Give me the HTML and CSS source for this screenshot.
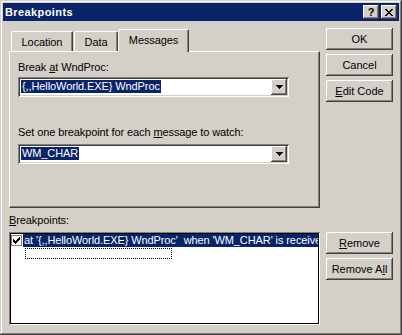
FILE: index.html
```html
<!DOCTYPE html>
<html lang="en">

<head>
    <meta charset="UTF-8">
    <link rel="stylesheet" href="styles.css">
</head>

<body>
    <div class="window">
        <div class="titlebar">
            <span class="title">Breakpoints</span>
            <div class="title-buttons">
                <button class="title-btn help">?</button>
                <button class="title-btn close">
                    <svg width="8" height="7" viewBox="0 0 8 7">
                        <path fill="#000" d="M0 0h2v1h-2z M6 0h2v1h-2z M1 1h2v1h-2z M5 1h2v1h-2z M2 2h4v1h-4z M3 3h2v1h-2z M2 4h4v1h-4z M1 5h2v1h-2z M5 5h2v1h-2z M0 6h2v1h-2z M6 6h2v1h-2z" />
                    </svg>
                </button>
            </div>
        </div>

        <div class="dialog">
            <div class="tab-area">
                <div class="tabs">
                    <div class="tab tab-location">Location</div>
                    <div class="tab tab-data">Data</div>
                    <div class="tab tab-messages selected">Messages</div>
                </div>
                <div class="tab-panel">
                    <div class="label">Break <u>a</u>t WndProc:</div>
                    <div class="combo">
                        <div class="combo-field"><span class="sel">{,,HelloWorld.EXE} WndProc</span></div>
                        <div class="combo-btn">
                            <svg width="7" height="4" viewBox="0 0 7 4">
                                <path fill="#000" d="M0 0h7v1h-7z M1 1h5v1h-5z M2 2h3v1h-3z M3 3h1v1h-1z" />
                            </svg>
                        </div>
                    </div>
                    <div class="label label-msg">Set one breakpoint for each <u>m</u>essage to watch:</div>
                    <div class="combo">
                        <div class="combo-field"><span class="sel">WM_CHAR</span></div>
                        <div class="combo-btn">
                            <svg width="7" height="4" viewBox="0 0 7 4">
                                <path fill="#000" d="M0 0h7v1h-7z M1 1h5v1h-5z M2 2h3v1h-3z M3 3h1v1h-1z" />
                            </svg>
                        </div>
                    </div>
                </div>
            </div>

            <div class="btn-col">
                <button class="btn">OK</button>
                <button class="btn">Cancel</button>
                <button class="btn"><u>E</u>dit Code</button>
            </div>

            <div class="label list-label"><u>B</u>reakpoints:</div>
            <div></div>

            <div class="listbox">
                <div class="list-row">
                    <span class="check">
                        <svg width="7" height="7" viewBox="0 0 7 7">
                            <path fill="#000" d="M6 0h1v1h-1z M5 1h2v1h-2z M0 2h1v1h-1z M4 2h3v1h-3z M0 3h2v1h-2z M3 3h3v1h-3z M0 4h5v1h-5z M1 5h3v1h-3z M2 6h1v1h-1z" />
                        </svg>
                    </span>
                    <span class="row-text">at '{,,HelloWorld.EXE} WndProc'  when 'WM_CHAR' is received</span>
                </div>
                <div class="list-row">
                    <span class="focus-rect"></span>
                </div>
            </div>

            <div class="btn-col">
                <button class="btn"><u>R</u>emove</button>
                <button class="btn">Remove A<u>l</u>l</button>
            </div>
        </div>
    </div>
</body>

</html>
```

FILE: styles.css
```css
body {
    margin: 0;
    font-family: "Liberation Sans", Arial, sans-serif;
    font-size: 11px;
    letter-spacing: -0.1px;
    color: #000;
    background-color: #d4d0c8;
}

u {
    text-underline-offset: 1px;
}

.window {
    width: 402px;
    height: 335px;
    box-sizing: border-box;
    padding: 3px;
    background-color: #d4d0c8;
    box-shadow: inset -1px -1px #404040, inset 1px 1px #d4d0c8,
        inset -2px -2px #808080, inset 2px 2px #fff;
}

.titlebar {
    height: 18px;
    background-color: #0a246a;
    color: #fff;
    display: flex;
    align-items: center;
    justify-content: space-between;
    padding: 0 2px;
}

.title {
    font-weight: bold;
    font-size: 11px;
    letter-spacing: 0.4px;
}

.title-buttons {
    display: flex;
    gap: 2px;
}

/* raised 3d look shared by all buttons */
.title-btn,
.btn,
.combo-btn {
    background-color: #d4d0c8;
    border: none;
    box-shadow: inset -1px -1px #404040, inset 1px 1px #fff,
        inset -2px -2px #808080, inset 2px 2px #d4d0c8;
}

.title-btn {
    width: 16px;
    height: 14px;
    padding: 0;
    display: flex;
    align-items: center;
    justify-content: center;
    font: bold 11px "Liberation Sans", Arial, sans-serif;
    color: #000;
}

.dialog {
    display: grid;
    grid-template-columns: 311px 67px;
    column-gap: 6px;
    align-items: start;
    padding: 7px 6px 0 6px;
}

.tabs {
    display: flex;
    align-items: flex-end;
    height: 23px;
    padding-left: 2px;
}

.tab {
    box-sizing: border-box;
    height: 20px;
    display: flex;
    align-items: center;
    justify-content: center;
    border-top: 1px solid #fff;
    border-left: 1px solid #fff;
    border-right: 1px solid #404040;
    border-radius: 2px 2px 0 0;
    box-shadow: inset -1px 0 #808080;
    background-color: #d4d0c8;
}

.tab-location {
    width: 62px;
    margin-right: 1px;
}

.tab-data {
    width: 44px;
}

.tab-messages {
    width: 71px;
}

.tab.selected {
    height: 23px;
    margin-bottom: -1px;
    padding-bottom: 2px;
    position: relative;
    z-index: 1;
}

.tab-panel {
    box-sizing: border-box;
    height: 157px;
    padding: 9px 0 0 8px;
    border-top: 1px solid #fff;
    border-left: 1px solid #fff;
    border-right: 1px solid #404040;
    border-bottom: 1px solid #404040;
    box-shadow: inset -1px -1px #808080;
}

.label {
    line-height: 13px;
    margin-bottom: 3px;
    white-space: nowrap;
}

.label-msg {
    margin-top: 29px;
    margin-bottom: 5px;
}

.combo {
    box-sizing: border-box;
    width: 271px;
    height: 20px;
    padding: 2px;
    display: flex;
    background-color: #fff;
    box-shadow: inset 1px 1px #808080, inset -1px -1px #fff,
        inset 2px 2px #404040, inset -2px -2px #d4d0c8;
}

.combo-field {
    flex: 1;
    padding: 1px;
    line-height: 13px;
}

.sel {
    display: inline-block;
    background-color: #0a246a;
    color: #fff;
    padding: 0 1px;
}

.combo-btn {
    width: 16px;
    height: 16px;
    display: flex;
    align-items: center;
    justify-content: center;
}

.btn-col {
    display: flex;
    flex-direction: column;
    gap: 4px;
}

.btn {
    height: 22px;
    width: 67px;
    padding: 0;
    font: 11px "Liberation Sans", Arial, sans-serif;
    color: #000;
}

.list-label {
    margin-top: 6px;
    margin-bottom: 5px;
}

.listbox {
    box-sizing: border-box;
    height: 93px;
    padding: 2px;
    background-color: #fff;
    overflow: hidden;
    box-shadow: inset 1px 1px #808080, inset -1px -1px #fff,
        inset 0 0 0 2px #000;
}

.list-row {
    height: 13px;
    display: flex;
    align-items: center;
    line-height: 13px;
}

.check {
    box-sizing: border-box;
    width: 11px;
    height: 11px;
    margin-right: 1px;
    border: 1px solid #808080;
    background-color: #fff;
    display: flex;
    align-items: center;
    justify-content: center;
    flex-shrink: 0;
}

.row-text {
    flex: 1;
    background-color: #0a246a;
    color: #fff;
    white-space: pre;
    overflow: hidden;
    padding-left: 1px;
}

.focus-rect {
    box-sizing: border-box;
    width: 147px;
    height: 11px;
    margin-left: 14px;
    border: 1px dotted #000;
}
```
